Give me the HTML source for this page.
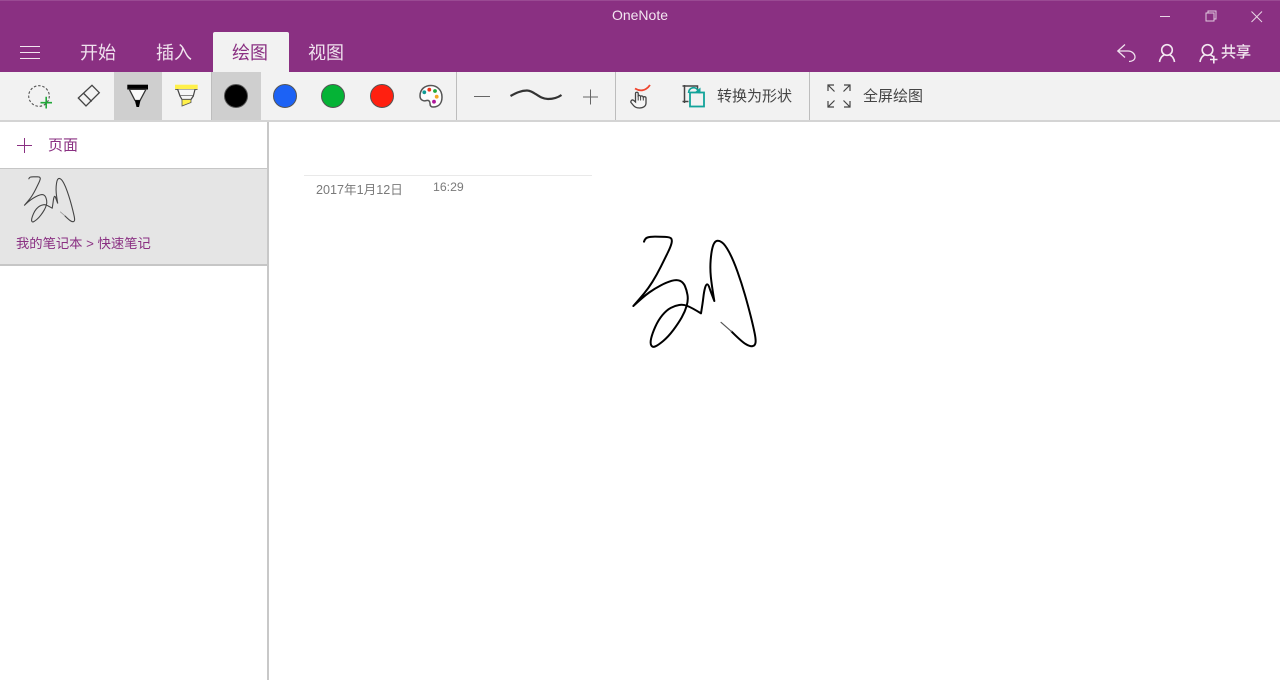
<!DOCTYPE html>
<html lang="zh-CN">
<head>
<meta charset="utf-8">
<title>OneNote</title>
<style>
html,body{margin:0;padding:0;width:1280px;height:680px;overflow:hidden;background:#fff}
body{position:relative;font-family:"Liberation Sans","Noto Sans CJK SC",sans-serif}
.a{position:absolute}
.t{position:absolute;white-space:nowrap;line-height:1}
svg{position:absolute;overflow:visible}
</style>
</head>
<body>
<div class="a" style="left:0;top:0;width:1280px;height:72px;background:#8a3082"></div>
<div class="a" style="left:0;top:0;width:1280px;height:1px;background:#9a4a93"></div>
<div class="t" style="left:540px;width:200px;text-align:center;top:8px;font-size:14px;color:#f3e6f1">OneNote</div>

<!-- hamburger -->
<div class="a" style="left:20px;top:46px;width:20px;height:1.3px;background:#f2e6f0"></div>
<div class="a" style="left:20px;top:52px;width:20px;height:1.3px;background:#f2e6f0"></div>
<div class="a" style="left:20px;top:58px;width:20px;height:1.3px;background:#f2e6f0"></div>

<!-- tabs -->
<div class="a" style="left:213px;top:32px;width:76px;height:40px;background:#f2f2f2;border-radius:2px 2px 0 0"></div>
<div class="t" style="left:80px;top:44px;font-size:18px;color:#f0e2ee">开始</div>
<div class="t" style="left:156px;top:44px;font-size:18px;color:#f0e2ee">插入</div>
<div class="t" style="left:232px;top:44px;font-size:18px;color:#8a3082">绘图</div>
<div class="t" style="left:308px;top:44px;font-size:18px;color:#f0e2ee">视图</div>

<!-- window controls -->
<div class="a" style="left:1160px;top:16px;width:10px;height:1px;background:#e8d5e6"></div>
<svg style="left:1205px;top:10px" width="12" height="12" fill="none" stroke="#e0cade" stroke-width="1"><rect x="1" y="3" width="8" height="8"/><path d="M3 3V1H11V9H9"/></svg>
<svg style="left:1251px;top:11px" width="12" height="12" fill="none" stroke="#e8d5e6" stroke-width="1"><path d="M.5 .5L11 11M11 .5L.5 11"/></svg>

<!-- top right -->
<svg style="left:1117px;top:43px" width="20" height="20" fill="none" stroke="#f0e2ee" stroke-width="1.3"><path d="M8 1.500L.8 8L8 14.500M.8 8H11C15 8 18 11 18 14C18 17 15 18.500 12 18.500"/></svg>
<svg style="left:1158px;top:43px" width="18" height="20" fill="none" stroke="#f3e8f1" stroke-width="1.600"><circle cx="9" cy="7" r="5.300"/><path d="M1.500 19C2 15.500 4 13 6 12M16.500 19C16 15.500 14 13 12 12"/></svg>
<svg style="left:1199px;top:43px" width="20" height="20" fill="none" stroke="#f3e8f1" stroke-width="1.600"><circle cx="8.500" cy="7" r="5.300"/><path d="M1 19C1.500 15.500 3.500 13 5.500 12M11.500 12C12.500 12.400 13.500 13 14 13.700M11 16.500H18.500M14.800 12.800V20.500"/></svg>
<div class="t" style="left:1221px;top:45px;font-size:15px;color:#f3e8f1;-webkit-text-stroke:.25px #f3e8f1">共享</div>

<!-- toolbar -->
<div class="a" style="left:0;top:72px;width:1280px;height:48px;background:#f2f2f2"></div>
<div class="a" style="left:0;top:120px;width:1280px;height:2px;background:#d4d4d4"></div>
<div class="a" style="left:114px;top:72px;width:48px;height:48px;background:#cfcfcf"></div>
<div class="a" style="left:212px;top:72px;width:49px;height:48px;background:#cfcfcf"></div>
<div class="a" style="left:211px;top:72px;width:1px;height:48px;background:#bdbdbd"></div>
<div class="a" style="left:456px;top:72px;width:1px;height:48px;background:#bdbdbd"></div>
<div class="a" style="left:615px;top:72px;width:1px;height:48px;background:#bdbdbd"></div>
<div class="a" style="left:809px;top:72px;width:1px;height:48px;background:#bdbdbd"></div>

<!-- lasso -->
<svg style="left:28px;top:84px" width="26" height="26" fill="none"><circle cx="11" cy="12" r="10.300" stroke="#555" stroke-width="1.100" stroke-dasharray="2.500 1.800"/><path d="M12.500 18.700H24M18.200 12.800V24.500" stroke="#22a83a" stroke-width="1.600"/></svg>
<!-- eraser -->
<svg style="left:77px;top:84px" width="24" height="24" fill="none" stroke="#444" stroke-width="1.300"><path d="M15 1.300L22.300 8.700L9 22L1.300 14Z"/><path d="M6.300 9L14.700 17.500"/></svg>
<!-- pen -->
<svg style="left:126px;top:84px" width="24" height="24"><rect x="1.300" y=".7" width="20.700" height="4.800" fill="#000"/><path d="M3.300 5.300L9 16.500H14L20 5.300Z" fill="#fbfbfb" stroke="#333" stroke-width="1.300"/><path d="M8.800 16.300H14.500L13 23H10.500Z" fill="#000"/></svg>
<!-- highlighter -->
<svg style="left:174px;top:84px" width="24" height="24"><rect x="1" y=".7" width="22.700" height="4.800" fill="#fff04a"/><path d="M1.200 5.500H23.500" stroke="#666" stroke-width="1"/><path d="M3.700 5.500L6 12H19.300L21 5.500" fill="#f6f6f6" stroke="#444" stroke-width="1.200"/><path d="M6 12L8 15.500H17L19.300 12" fill="#f6f6f6" stroke="#444" stroke-width="1.200"/><path d="M8 15.500H17V18.500L8 22Z" fill="#fff04a" stroke="#555" stroke-width=".8"/></svg>

<!-- colours -->
<svg style="left:224px;top:84px" width="24" height="24"><circle cx="12" cy="12" r="11.500" fill="#000" stroke="#555"/></svg>
<svg style="left:273px;top:84px" width="24" height="24"><circle cx="12" cy="12" r="11.500" fill="#1c62f5" stroke="#555"/></svg>
<svg style="left:321px;top:84px" width="24" height="24"><circle cx="12" cy="12" r="11.500" fill="#05b336" stroke="#555"/></svg>
<svg style="left:370px;top:84px" width="24" height="24"><circle cx="12" cy="12" r="11.500" fill="#ff2010" stroke="#555"/></svg>
<!-- palette -->
<svg style="left:419px;top:84px" width="24" height="24"><path d="M1 12C1 5 6 1.500 12 1.500C18 1.500 23 6 23 13C23 19 20 23 14 23C11.500 23 11 21.500 11 19.500C11 17 9.500 16 7.500 16.500C4.500 17.500 1 16 1 12Z" fill="#fdfdfd" stroke="#555" stroke-width="1.500"/><circle cx="5.300" cy="8.300" r="1.900" fill="#0e9a94"/><circle cx="10.300" cy="5.700" r="1.900" fill="#f0341c"/><circle cx="16" cy="7" r="1.900" fill="#22a83a"/><circle cx="17.700" cy="12.700" r="1.900" fill="#f5a623"/><circle cx="15" cy="17.700" r="1.900" fill="#b0159a"/></svg>

<!-- stroke width -->
<div class="a" style="left:474px;top:96px;width:16px;height:1px;background:#666"></div>
<svg style="left:510px;top:88px" width="52" height="16" fill="none"><path d="M.5 8C6 5 11 2.500 17 2.500C24 2.500 29 11 38 11C43 11 48 9.500 51.500 7" stroke="#333" stroke-width="2.200"/></svg>
<svg style="left:583px;top:89px" width="16" height="16" fill="none" stroke="#666" stroke-width="1"><path d="M0 8H15M7.500 .5V15.500"/></svg>

<!-- ink to text hand -->
<svg style="left:629px;top:83px" width="24" height="26" fill="none"><path d="M6 5.500C10 8 16 9 21 2" stroke="#f0452e" stroke-width="1.800"/><path d="M2 19.500L4.500 22.500C6 24.500 8 25 10.500 25C14.500 25 17 23 17 20V15C17 13.500 15 13.300 14.300 14.300C14 12.800 12.300 12.500 11.500 13.500C11.300 12.300 10 12 9.200 12.800V10.500C9.200 8.800 6.500 8.800 6.500 10.500V19L4.500 17.300C3 16.300 1.300 18 2 19.500Z" fill="#f6f6f6" stroke="#444" stroke-width="1.300"/><path d="M9.200 13V17.500M11.600 13.500V17.500M14.300 14.300V17.500" stroke="#444" stroke-width="1"/></svg>

<!-- convert to shape -->
<svg style="left:682px;top:84px" width="24" height="24" fill="none"><path d="M2.500 1V19M.5 2H15.500V6M.5 17.500H6.500" stroke="#444" stroke-width="1.500"/><rect x="8" y="8.500" width="14" height="14" fill="#f2f2f2" stroke="#12a39a" stroke-width="1.800"/><path d="M6.500 9C7 3 13.500 2 16 6.500" stroke="#12a39a" stroke-width="1.600"/><path d="M12.500 8.500L18.500 9.500L18.500 3.500Z" fill="#12a39a"/></svg>
<div class="t" style="left:717px;top:89px;font-size:15px;color:#444">转换为形状</div>

<!-- fullscreen -->
<svg style="left:827px;top:84px" width="24" height="24" fill="none" stroke="#444" stroke-width="1.200"><path d="M1 7V1H7M1 1L7.500 7.500M17 1H23V7M23 1L16.500 7.500M1 17V23H7M1 23L7.500 16.500M17 23H23V17M23 23L16.500 16.500"/></svg>
<div class="t" style="left:863px;top:89px;font-size:15px;color:#444">全屏绘图</div>

<!-- sidebar -->
<div class="a" style="left:267px;top:122px;width:1.500px;height:558px;background:#c8c8c8"></div>
<svg style="left:17px;top:138px" width="15" height="15" fill="none" stroke="#8a3082" stroke-width="1"><path d="M0 7.500H15M7.500 0V15"/></svg>
<div class="t" style="left:48px;top:138px;font-size:15px;color:#8a3082">页面</div>

<div class="a" style="left:0;top:168px;width:267px;height:97px;background:#e5e5e5"></div>
<div class="a" style="left:0;top:168px;width:267px;height:1px;background:#c6c6c6"></div>
<div class="a" style="left:0;top:264px;width:267px;height:1.500px;background:#c6c6c6"></div>
<svg style="left:18.500px;top:172.400px" width="61.500" height="55.350" viewBox="0 0 450 405" fill="none" stroke-linejoin="round" stroke-linecap="round"><path d="M72 50Q75 40 82.500 37.500Q90 35 105 35Q120 35 135 35.500Q150 36 153.500 40.500Q157 45 154.500 55Q152 65 143.500 82.500Q135 100 122.500 125Q110 150 97.500 170Q85 190 72.500 205Q60 220 40 243Q70 215 87.500 202.500Q105 190 122.500 181Q140 172 155 167.500Q170 163 180 167.500Q190 172 195 183.500Q200 195 202.500 210Q205 225 200 242.500Q195 260 185 277.500Q175 295 160 315Q145 335 130 347.500Q115 360 106.500 364Q98 368 94 361.500Q90 355 93.500 340Q97 325 106 305Q115 285 127.500 270Q140 255 152.500 248.500Q165 242 177.500 240Q190 238 202.500 243Q215 248 243 265Q248 235 250 217.500Q252 200 255 189Q258 178 261.500 178Q265 178 268.500 189Q272 200 283 228Q275 180 272.500 155Q270 130 272 105Q274 80 278 66Q282 52 288.500 48.500Q295 45 305 51.500Q315 58 327.500 81.500Q340 105 352.500 140Q365 175 375 210Q385 245 392.500 275Q400 305 404 325Q408 345 406.500 353.500Q405 362 397.500 363.500Q390 365 377.500 357.500Q365 350 335 320" stroke="#444" stroke-width="8"/><path d="M335 320L303 292" stroke="#999" stroke-width="6"/></svg>
<div class="t" style="left:16px;top:237px;font-size:13.300px;color:#8a3082">我的笔记本 &gt; 快速笔记</div>

<!-- page title area -->
<div class="a" style="left:304px;top:175px;width:288px;height:1px;background:#e9e9e9"></div>
<div class="t" style="left:316px;top:184px;font-size:12.600px;color:#7a7a7a">2017年1月12日</div>
<div class="t" style="left:433px;top:181px;font-size:12.300px;color:#7a7a7a">16:29</div>

<!-- ink -->
<svg style="left:620px;top:225px;filter:blur(.3px)" width="150" height="135" viewBox="0 0 450 405" fill="none" stroke-linejoin="round" stroke-linecap="round"><path d="M72 50Q75 40 82.500 37.500Q90 35 105 35Q120 35 135 35.500Q150 36 153.500 40.500Q157 45 154.500 55Q152 65 143.500 82.500Q135 100 122.500 125Q110 150 97.500 170Q85 190 72.500 205Q60 220 40 243Q70 215 87.500 202.500Q105 190 122.500 181Q140 172 155 167.500Q170 163 180 167.500Q190 172 195 183.500Q200 195 202.500 210Q205 225 200 242.500Q195 260 185 277.500Q175 295 160 315Q145 335 130 347.500Q115 360 106.500 364Q98 368 94 361.500Q90 355 93.500 340Q97 325 106 305Q115 285 127.500 270Q140 255 152.500 248.500Q165 242 177.500 240Q190 238 202.500 243Q215 248 243 265Q248 235 250 217.500Q252 200 255 189Q258 178 261.500 178Q265 178 268.500 189Q272 200 283 228Q275 180 272.500 155Q270 130 272 105Q274 80 278 66Q282 52 288.500 48.500Q295 45 305 51.500Q315 58 327.500 81.500Q340 105 352.500 140Q365 175 375 210Q385 245 392.500 275Q400 305 404 325Q408 345 406.500 353.500Q405 362 397.500 363.500Q390 365 377.500 357.500Q365 350 335 320" stroke="#000" stroke-width="6"/><path d="M335 320L303 292" stroke="#555" stroke-width="3.500"/></svg>
</body>
</html>
